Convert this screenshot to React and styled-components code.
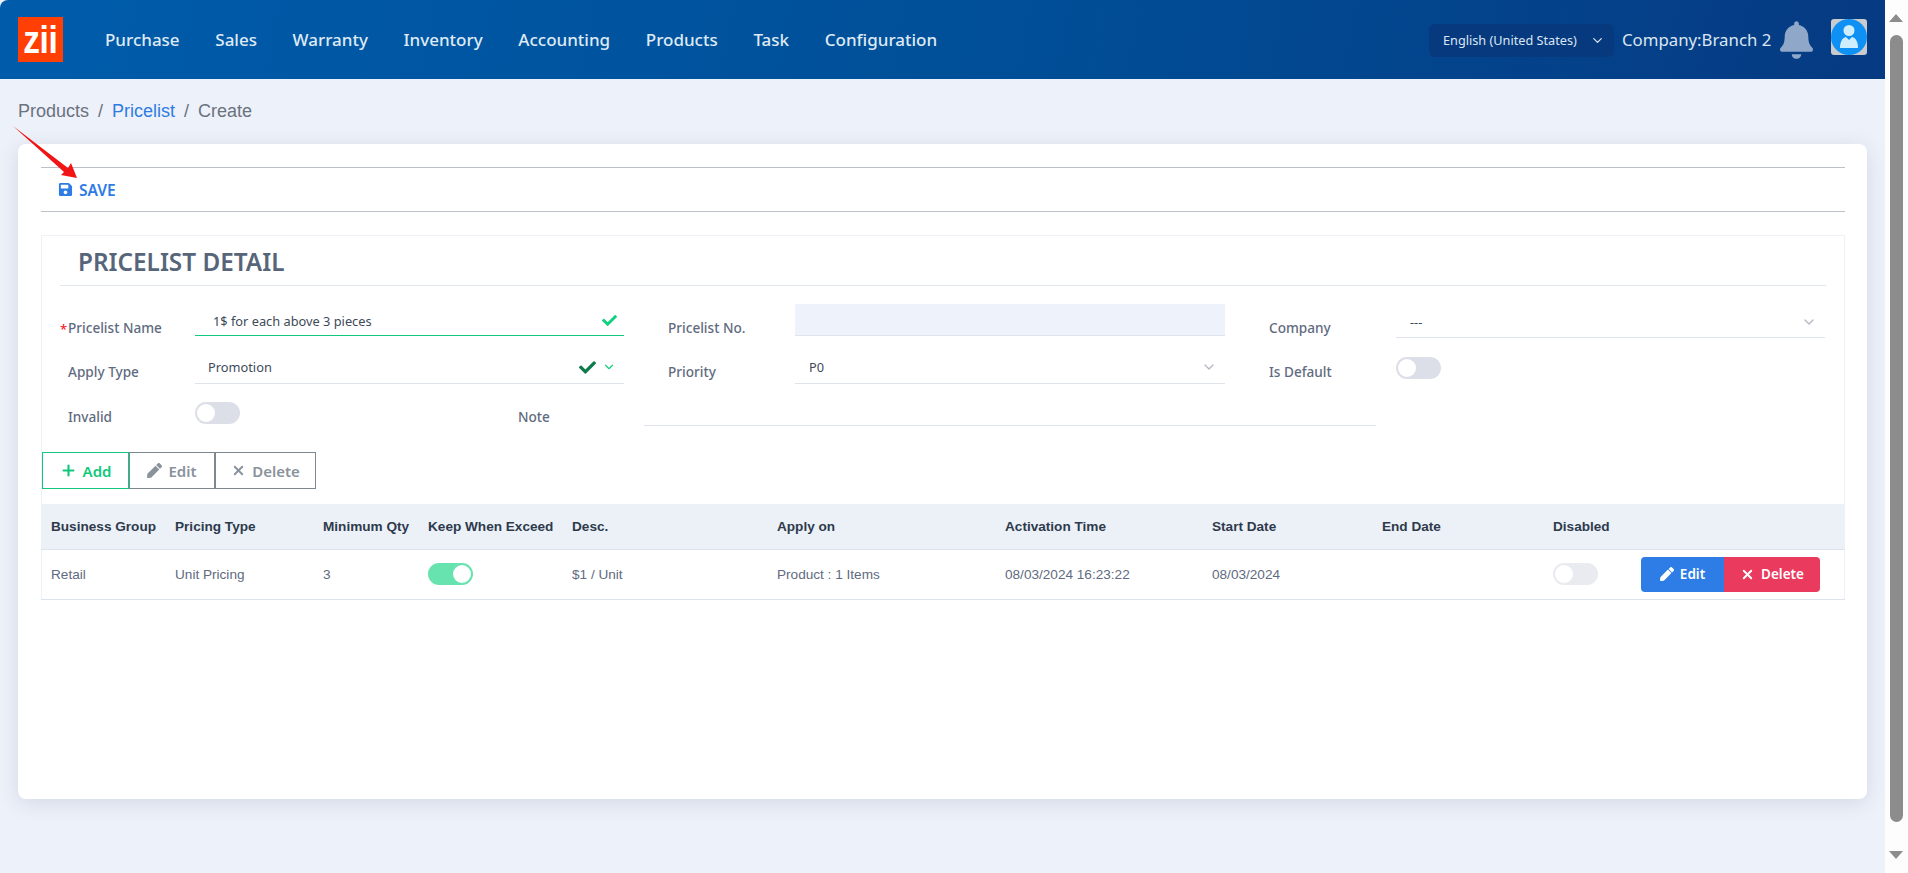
import React from 'react';
import styled, { createGlobalStyle } from 'styled-components';
import { FaBell, FaSave, FaPen, FaCheck } from 'react-icons/fa';
import { ChevronDown, Plus, X } from 'lucide-react';

const Global = createGlobalStyle`
  html, body { margin: 0; padding: 0; height: 873px; overflow: hidden; background: #fdfdfd; }
  #root { height: 873px; }
  * { box-sizing: border-box; }
`;

const Page = styled.div`
  display: flex; width: 1908px; height: 873px; overflow: hidden; position: relative;
  font-family: "Noto Sans", "Open Sans", sans-serif;
`;
const Main = styled.div`
  width: 1885px; height: 873px; background: #edf1f9; display: flex; flex-direction: column;
`;
const Header = styled.header`
  height: 79px; flex: none; display: flex; align-items: center; padding-left: 18px;
  background: linear-gradient(100deg, #005cab 0%, #004e97 55%, #063a82 100%);
  border-top-left-radius: 8px;
`;
const LogoBox = styled.div`
  width: 45px; height: 45px; margin-top: -1px; flex: none; background: #ff3f03; color: #fff;
  display: flex; align-items: center; justify-content: center;
`;
const LogoText = styled.span`
  display: block; font: 700 38px/38px "Liberation Sans", sans-serif; letter-spacing: -0.5px;
  transform: translateY(1px) scaleX(0.88);
`;
const Nav = styled.nav`
  display: flex; gap: 35.65px; margin-left: 42px; flex: 1;
`;
const NavItem = styled.a`
  color: #dfeaf5; font-size: 17px; font-weight: 500; line-height: 24px;
`;
const LangBox = styled.div`
  width: 185px; height: 33px; margin-top: 1px; background: #07397f; border-radius: 6px; color: #dbe6f2;
  display: flex; align-items: center; justify-content: space-between; padding: 0 9px 0 14px; font-size: 12.7px;
`;
const Company = styled.span`
  color: #dbe6f2; font-size: 16.8px; margin-left: 8px; width: 158px; white-space: nowrap;
`;
const BellWrap = styled.div`
  width: 33px; height: 38px; display: flex; align-items: center; color: #8fa8c9;
`;
const Avatar = styled.div`
  width: 36px; height: 36px; margin: 0 18px 5px 18px; background: #c9cbcf; border-radius: 3px;
`;
const Crumbs = styled.div`
  padding: 21px 0 0 18px; height: 65px; font: 18px/22px "Liberation Sans", Arial, sans-serif; color: #6b7280;
  display: flex; gap: 9px;
`;
const CrumbLink = styled.span` color: #2f7be5; `;
const Card = styled.section`
  margin: 0 18px; width: 1849px; height: 655px; background: #fff; border-radius: 8px;
  box-shadow: 0 4px 20px rgba(60, 80, 130, 0.15); padding: 23px 22px 0 23px; flex: none;
`;
const SaveBar = styled.div`
  height: 45px; border-top: 1px solid #bcc1c9; border-bottom: 1px solid #bcc1c9;
  display: flex; align-items: center; padding-left: 17px; gap: 6px; color: #2f7be5;
  font-size: 15.5px; font-weight: 600;
`;
const Detail = styled.div`
  margin-top: 23px; border: 1px solid #eef1f6; border-bottom: none;
`;
const Title = styled.h2`
  margin: 0 18px 0 18px; height: 50px; padding: 0 0 0 18px; border-bottom: 1px solid #e2e7ee;
  font-size: 24.3px; font-weight: 600; line-height: 52px; color: #56657a;
`;
const Form = styled.div`
  margin-top: 18px; padding-left: 26px; display: flex; flex-direction: column; gap: 10px;
`;
const Row = styled.div`
  display: grid; grid-template-columns: 556px 557px 556px; column-gap: 44px;
`;
const NoteRow = styled.div`
  display: grid; grid-template-columns: 127px 323px 126px 732px; height: 32px;
`;
const Field = styled.div`
  display: grid; grid-template-columns: 127px 1fr;
`;
const Label = styled.label`
  position: relative; padding-top: ${p => p.$pt ?? 14}px; font-size: 13.6px; font-weight: 500; line-height: 20px; color: #5f6b80;
`;
const Star = styled.span`
  position: absolute; left: -8px; top: 15px; color: #f5222d; font-size: 13px;
`;
const Control = styled.div`
  display: flex; align-items: center; justify-content: space-between;
  height: ${p => p.$h || 32}px; padding: ${p => p.$pt ?? 3}px ${p => p.$pr ?? 8}px 0 ${p => p.$pl ?? 14}px;
  border-bottom: 1px solid ${p => p.$line || '#dfe3ea'};
  background: ${p => p.$bg || 'transparent'}; font-size: 12.8px; color: #3e4a5a;
`;
const Icons = styled.span` display: flex; align-items: center; gap: 6px; `;
const Switch = styled.span`
  width: 45px; height: 22px; margin-top: ${p => p.$mt ?? 8}px; border-radius: 11px;
  background: ${p => p.$on ? '#66e3ae' : p.$muted ? '#e9ebf0' : '#dcdfe7'}; padding: 2px;
  display: flex; justify-content: ${p => p.$on ? 'flex-end' : 'flex-start'};
`;
const Knob = styled.span`
  width: 18px; height: 18px; border-radius: 50%; background: #fff;
`;
const Toolbar = styled.div` margin-top: 26px; display: flex; `;
const ToolBtn = styled.button`
  height: 37px; width: ${p => p.$w}px; background: #fff;
  border: 1px solid ${p => p.$add ? '#10c97c' : '#7f8791'}; color: ${p => p.$add ? '#10c97c' : '#8a929c'};
  display: flex; align-items: center; justify-content: center; gap: 6px;
  font: 600 15px "Noto Sans", sans-serif; padding: 0;
`;
const Table = styled.table`
  margin: 15px -1px 0; width: 1804px; border-collapse: collapse; table-layout: fixed;
  font-family: "Liberation Sans", Arial, sans-serif; font-size: 13.6px;
`;
const Th = styled.th`
  background: #ecf1f8; height: 45px; padding: 0 0 0 10px; text-align: left; font-weight: 700; color: #2e3a4c;
  border-bottom: 1px solid #dbe3ee; white-space: nowrap;
`;
const Td = styled.td`
  height: 50px; padding: 0 0 0 10px; color: #5f6b80; border-bottom: 1px solid #dbe3ee; white-space: nowrap;
`;
const RowActions = styled.div` display: flex; `;
const ActBtn = styled.button`
  height: 35px; width: ${p => p.$w}px; border: none; color: #fff; padding: 0;
  background: ${p => p.$red ? '#ea3a5d' : '#2e7de6'};
  border-radius: ${p => p.$red ? '0 4px 4px 0' : '4px 0 0 4px'};
  display: flex; align-items: center; justify-content: center; gap: 6px;
  font: 600 13.5px "Noto Sans", sans-serif;
`;
const Scroll = styled.div`
  width: 23px; height: 873px; position: relative; background: #fdfdfd; flex: none;
`;
const Thumb = styled.div`
  position: absolute; left: 5px; top: 35px; width: 13px; height: 787px; border-radius: 7px; background: #8c8c8c;
`;
const ArrowUp = styled.div`
  position: absolute; left: 4px; top: 14px; width: 0; height: 0;
  border-left: 7.5px solid transparent; border-right: 7.5px solid transparent; border-bottom: 8px solid #8c8c8c;
`;
const ArrowDown = styled.div`
  position: absolute; left: 4px; top: 851px; width: 0; height: 0;
  border-left: 7.5px solid transparent; border-right: 7.5px solid transparent; border-top: 8px solid #8c8c8c;
`;
const RedArrow = styled.svg`
  position: absolute; left: 0; top: 120px; width: 90px; height: 70px; pointer-events: none;
`;

const widths = [124,148,105,144,205,228,207,170,171,88,214];
const heads = ['Business Group','Pricing Type','Minimum Qty','Keep When Exceed','Desc.','Apply on','Activation Time','Start Date','End Date','Disabled',''];

export default function App() {
  return (
    <Page>
      <Global />
      <Main>
        <Header>
          <LogoBox><LogoText>zii</LogoText></LogoBox>
          <Nav>
            {['Purchase','Sales','Warranty','Inventory','Accounting','Products','Task','Configuration'].map(n => <NavItem key={n}>{n}</NavItem>)}
          </Nav>
          <LangBox>English (United States)<ChevronDown size={15} /></LangBox>
          <Company>Company:Branch 2</Company>
          <BellWrap><FaBell size={38} /></BellWrap>
          <Avatar>
            <svg width="36" height="36" viewBox="0 0 36 36">
              <circle cx="18" cy="18" r="18" fill="#0f90f5" />
              <circle cx="18" cy="11.5" r="5.5" fill="#cfeefd" />
              <path d="M9 29c0-6 2-10 6-11l3 3 3-3c4 1 6 5 6 11z" fill="#cfeefd" />
            </svg>
          </Avatar>
        </Header>
        <Crumbs>
          <span>Products</span><span>/</span><CrumbLink>Pricelist</CrumbLink><span>/</span><span>Create</span>
        </Crumbs>
        <Card>
          <SaveBar><FaSave size={15} />SAVE</SaveBar>
          <Detail>
            <Title>PRICELIST DETAIL</Title>
            <Form>
              <Row>
                <Field>
                  <Label><Star>*</Star>Pricelist Name</Label>
                  <Control $pl={18} $pr={7} $pt={2} $line="#10c97c">1$ for each above 3 pieces<FaCheck size={15} color="#10d07f" /></Control>
                </Field>
                <Field>
                  <Label>Pricelist No.</Label>
                  <Control $bg="#eef3fb" />
                </Field>
                <Field>
                  <Label>Company</Label>
                  <Control $h={34} $pr={8}>---<ChevronDown size={16} color="#b4bac4" /></Control>
                </Field>
              </Row>
              <Row>
                <Field>
                  <Label>Apply Type</Label>
                  <Control $h={36} $pl={13}>Promotion<Icons><FaCheck size={17} color="#0f7a4a" /><ChevronDown size={14} color="#10d07f" /></Icons></Control>
                </Field>
                <Field>
                  <Label>Priority</Label>
                  <Control $h={36}>P0<ChevronDown size={16} color="#b4bac4" /></Control>
                </Field>
                <Field>
                  <Label>Is Default</Label>
                  <Switch $mt={9}><Knob /></Switch>
                </Field>
              </Row>
              <NoteRow>
                <Label $pt={13}>Invalid</Label>
                <Switch><Knob /></Switch>
                <Label $pt={13}>Note</Label>
                <Control />
              </NoteRow>
            </Form>
            <Toolbar>
              <ToolBtn $add $w={87}><Plus size={17} strokeWidth={3} />Add</ToolBtn>
              <ToolBtn $w={86}><FaPen size={15} />Edit</ToolBtn>
              <ToolBtn $w={101}><X size={15} strokeWidth={3} />Delete</ToolBtn>
            </Toolbar>
            <Table>
              <colgroup>{widths.map((w, i) => <col key={i} style={{ width: w }} />)}</colgroup>
              <thead><tr>{heads.map((h, i) => <Th key={i}>{h}</Th>)}</tr></thead>
              <tbody>
                <tr>
                  <Td>Retail</Td>
                  <Td>Unit Pricing</Td>
                  <Td>3</Td>
                  <Td><Switch $on $mt={0}><Knob /></Switch></Td>
                  <Td>$1 / Unit</Td>
                  <Td>Product : 1 Items</Td>
                  <Td>08/03/2024 16:23:22</Td>
                  <Td>08/03/2024</Td>
                  <Td></Td>
                  <Td><Switch $muted $mt={0}><Knob /></Switch></Td>
                  <Td>
                    <RowActions>
                      <ActBtn $w={83}><FaPen size={14} />Edit</ActBtn>
                      <ActBtn $red $w={96}><X size={15} strokeWidth={3} />Delete</ActBtn>
                    </RowActions>
                  </Td>
                </tr>
              </tbody>
            </Table>
          </Detail>
        </Card>
      </Main>
      <Scroll>
        <ArrowUp />
        <Thumb />
        <ArrowDown />
      </Scroll>
      <RedArrow viewBox="0 0 90 70">
        <path d="M13 6 L68 48 L71 43 L77 58 L61 55 L64 52 Z" fill="#f01414" />
      </RedArrow>
    </Page>
  );
}
